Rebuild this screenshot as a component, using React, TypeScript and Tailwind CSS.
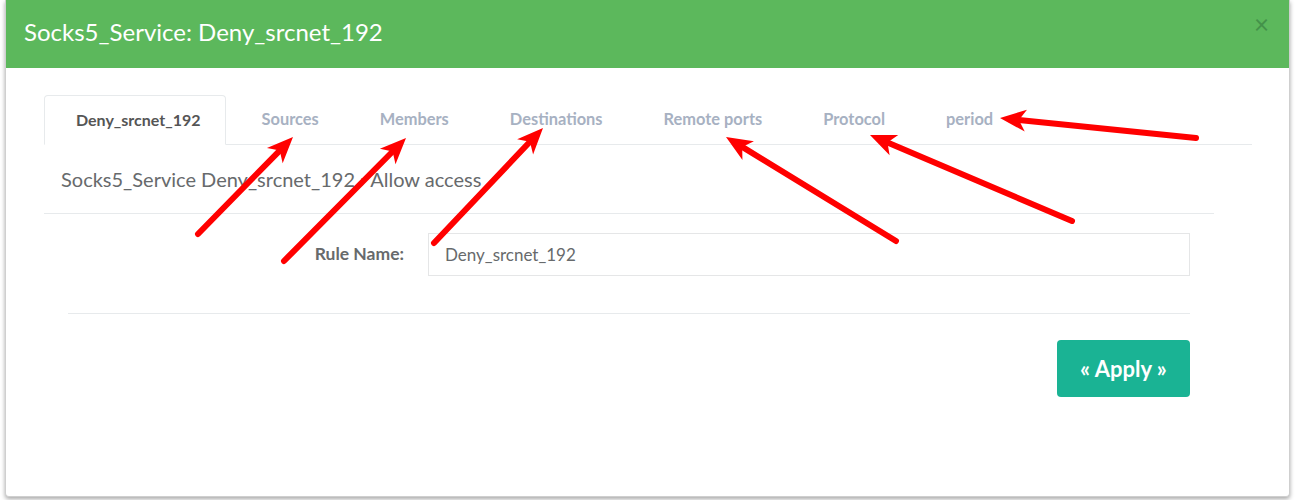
import React from "react";

type Arrow = { x1: number; y1: number; x2: number; y2: number };

const arrows: Arrow[] = [
  { x1: 198, y1: 234, x2: 293, y2: 137 },
  { x1: 284, y1: 261, x2: 406, y2: 138 },
  { x1: 434, y1: 243, x2: 543, y2: 128 },
  { x1: 896, y1: 241, x2: 726, y2: 137 },
  { x1: 1072, y1: 221, x2: 870, y2: 135 },
  { x1: 1196, y1: 138, x2: 1000, y2: 118 },
];

function ArrowShape({ a }: { a: Arrow }) {
  const dx = a.x2 - a.x1;
  const dy = a.y2 - a.y1;
  const len = Math.hypot(dx, dy);
  const ux = dx / len;
  const uy = dy / len;
  const px = -uy;
  const py = ux;
  const L = 26;
  const W = 11;
  const notch = 7;
  const bx = a.x2 - ux * L;
  const by = a.y2 - uy * L;
  const nx = a.x2 - ux * (L - notch);
  const ny = a.y2 - uy * (L - notch);
  const pts = [
    [a.x2, a.y2],
    [bx + px * W, by + py * W],
    [nx, ny],
    [bx - px * W, by - py * W],
  ]
    .map((p) => p.join(","))
    .join(" ");
  return (
    <g>
      <line x1={a.x1} y1={a.y1} x2={nx} y2={ny} stroke="#ff0000" strokeWidth={6} strokeLinecap="round" />
      <polygon points={pts} fill="#ff0000" />
    </g>
  );
}

const tabs = ["Sources", "Members", "Destinations", "Remote ports", "Protocol", "period"];

export default function App() {
  return (
    <div
      className="relative w-[1296px] h-[500px] bg-white overflow-hidden"
      style={{ fontFamily: "Lato, 'Open Sans', 'Liberation Sans', sans-serif" }}
    >
      <div className="ml-[5px] w-[1285px] h-[497px] bg-white rounded-b-[4px] border-l border-r border-b border-[#cfcfcf] shadow-[0_2px_4px_rgba(0,0,0,0.35)] flex flex-col">
        {/* header */}
        <div className="relative h-[68px] bg-[#5cb85c] flex items-center pl-[18px] pb-[4px]">
          <span className="text-white text-[24px] leading-none">Socks5_Service: Deny_srcnet_192</span>
          <span className="absolute right-[20px] top-[11px] text-[26px] leading-none text-[#44924a]">×</span>
        </div>

        {/* body */}
        <div className="pl-[38px] pr-[37px] pt-[27px]">
          {/* tabs */}
          <div className="flex border-b border-[#e7eaec] h-[50px]">
            <div className="h-[50px] -mb-px flex items-center pl-[31px] pr-[24px] border border-[#e7eaec] border-b-white rounded-t-[4px] bg-white text-[16px] font-bold text-[#555555]">
              Deny_srcnet_192
            </div>
            {tabs.map((t) => (
              <div key={t} className="h-[49px] flex items-center pl-[36px] pr-[25px] text-[16.4px] font-bold text-[#a7b1c2]">
                {t}
              </div>
            ))}
          </div>

          {/* breadcrumb */}
          <div className="mr-[38px] h-[69px] border-b border-[#e7eaec] flex items-center pl-[17px]">
            <span className="text-[20px] text-[#676a6c]">Socks5_Service Deny_srcnet_192 › Allow access</span>
          </div>

          {/* form */}
          <div className="ml-[24px] w-[1122px]">
            <div className="mt-[19px] flex items-center">
              <div className="w-[336px] text-right text-[17.5px] font-bold text-[#676a6c]">Rule Name:</div>
              <div className="ml-[24px] flex-1 h-[43px] border border-[#e5e6e7] flex items-center pl-[16px] text-[17px] text-[#676a6c]">
                Deny_srcnet_192
              </div>
            </div>
            <div className="mt-[37px] border-t border-[#e7eaec]" />
            <div className="mt-[26px] flex justify-end">
              <div className="w-[133px] h-[57px] rounded-[4px] bg-[#1ab394] flex items-center justify-center text-white text-[22px] font-bold">
                « Apply »
              </div>
            </div>
          </div>
        </div>
      </div>

      {/* annotation arrows */}
      <svg className="absolute left-0 top-0 pointer-events-none" width={1296} height={500}>
        {arrows.map((a, i) => (
          <ArrowShape key={i} a={a} />
        ))}
      </svg>
    </div>
  );
}
